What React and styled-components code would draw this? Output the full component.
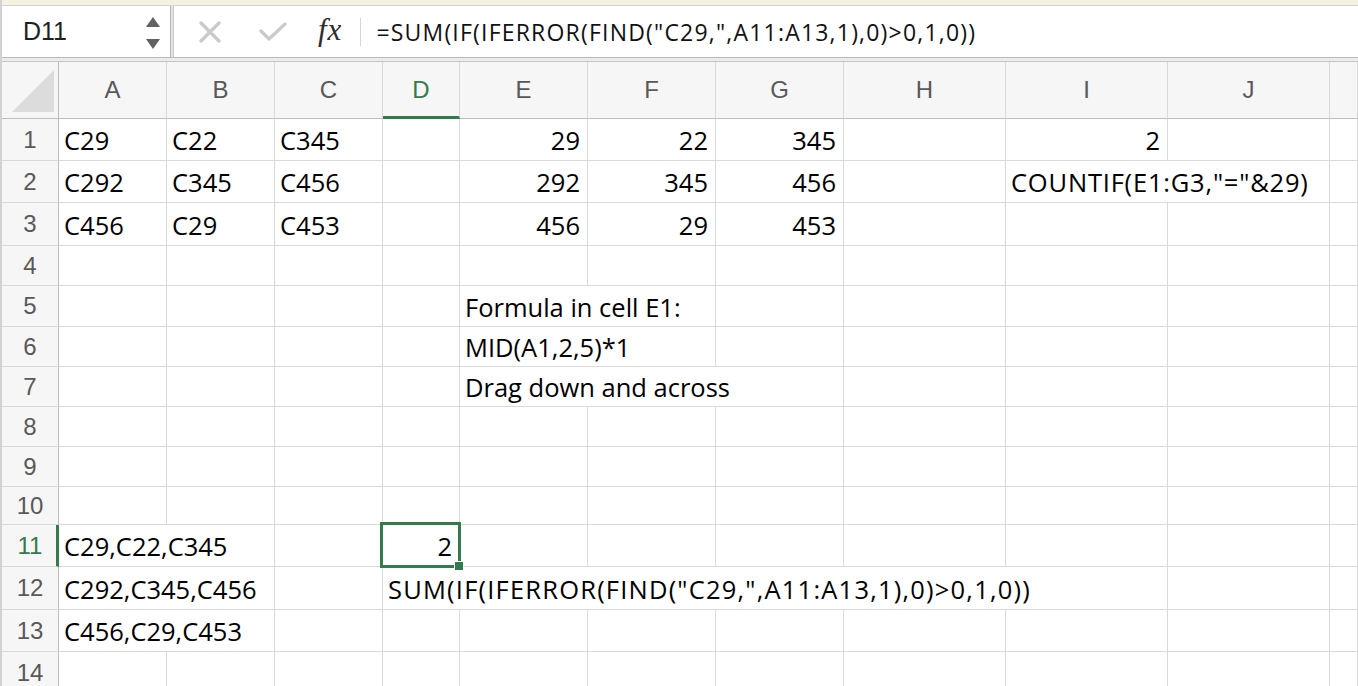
import React from "react";
import styled, { createGlobalStyle } from "styled-components";

const GREEN = "#357a4c";

const Global = createGlobalStyle`
  html, body { margin: 0; padding: 0; background: #ffffff; overflow: hidden; }
  * { box-sizing: border-box; }
`;

const Window = styled.div`
  width: 1358px;
  height: 686px;
  overflow: hidden;
  display: flex;
  flex-direction: column;
  border-left: 2px solid #d2d2d2;
  background: #fff;
`;

const TopStrip = styled.div`
  height: 6px;
  flex: none;
  background: #f6f0e2;
  border-bottom: 1px solid #d9d4c8;
`;

const FormulaBar = styled.div`
  height: 51px;
  flex: none;
  display: flex;
  align-items: stretch;
  background: #fff;
`;

const NameBox = styled.div`
  width: 168px;
  display: flex;
  align-items: center;
  justify-content: space-between;
  padding: 0 10px 0 21px;
  font-family: "Liberation Sans", Arial, sans-serif;
  font-size: 25px;
  color: #1f1f1f;
`;

const Stepper = styled.div`
  display: flex;
  flex-direction: column;
  gap: 12px;
  padding-top: 2px;
`;

const Divider = styled.div`
  width: 4px;
  flex: none;
  background: #e4e4e4;
  border-left: 1px solid #b4b4b4;
  border-right: 1px solid #c9c9c9;
`;

const FormulaArea = styled.div`
  flex: 1;
  display: flex;
  align-items: center;
  padding-left: 24px;
`;

const IconBtn = styled.div`
  width: ${(p) => p.$w}px;
  margin-right: ${(p) => p.$mr}px;
  display: flex;
  align-items: center;
  justify-content: center;
`;

const Fx = styled.div`
  font-family: "Liberation Serif", "Times New Roman", serif;
  font-style: italic;
  font-size: 31px;
  color: #2d2d2d;
  margin-right: 18px;
  margin-top: -4px;
  letter-spacing: 1px;
`;

const Sep = styled.div`
  width: 1px;
  height: 28px;
  background: #d4d4d4;
  margin-right: 15px;
`;

const FormulaText = styled.div`
  font-family: "Open Sans", Lato, sans-serif;
  font-size: 23px;
  letter-spacing: 1.2px;
  color: #111;
  white-space: nowrap;
  padding-top: 1px;
`;

const BarGap = styled.div`
  height: 5px;
  flex: none;
  background: #ececec;
  border-top: 1px solid #b9b9b9;
  border-bottom: 1px solid #c6c6c6;
`;

const Sheet = styled.div`
  flex: 1;
  display: grid;
  grid-template-columns: 57px 108px 108px 108px 77px 128px 128px 128px 162px 162px 162px 1fr;
  grid-template-rows: 57px 42px 42px 43px 40px 41px 40px 40px 40px 40px 38px 42px 43px 42px 42px;
  overflow: hidden;
`;

const Corner = styled.div`
  background: #f6f6f6;
  border-right: 1px solid #bdbdbd;
  border-bottom: 1px solid #bdbdbd;
  display: flex;
  align-items: flex-end;
  justify-content: flex-end;
  padding: 0 4px 6px 0;
`;

const ColHeader = styled.div`
  background: #f6f6f6;
  border-right: 1px solid #d9d9d9;
  border-bottom: ${(p) => (p.$active ? `3px solid ${GREEN}` : "1px solid #bdbdbd")};
  display: flex;
  align-items: center;
  justify-content: center;
  padding-top: ${(p) => (p.$active ? "2px" : "0")};
  font-family: "Liberation Sans", Arial, sans-serif;
  font-size: 24px;
  color: ${(p) => (p.$active ? GREEN : "#595959")};
`;

const RowHeader = styled.div`
  background: #f6f6f6;
  border-right: ${(p) => (p.$active ? `3px solid ${GREEN}` : "1px solid #bdbdbd")};
  border-bottom: 1px solid #d9d9d9;
  display: flex;
  align-items: center;
  justify-content: center;
  padding-left: ${(p) => (p.$active ? "2px" : "0")};
  font-family: "Liberation Sans", Arial, sans-serif;
  font-size: 24px;
  color: ${(p) => (p.$active ? GREEN : "#595959")};
`;

const Cell = styled.div`
  position: relative;
  border-right: 1px solid #d9d9d9;
  border-bottom: 1px solid #d9d9d9;
  display: flex;
  align-items: stretch;
  justify-content: ${(p) => (p.$right ? "flex-end" : "flex-start")};
  white-space: nowrap;
  font-family: "Open Sans", Lato, sans-serif;
  font-size: 25.5px;
  color: #000;
`;

const CellText = styled.span`
  position: relative;
  z-index: 1;
  display: flex;
  align-items: center;
  padding: 1px ${(p) => (p.$right ? "7px" : "0")} 0 ${(p) => (p.$right ? "0" : "5px")};
  letter-spacing: ${(p) => p.$ls || 0}px;
  background: ${(p) => (p.$cover ? "#fff" : "transparent")};
`;

const Selection = styled.div`
  position: absolute;
  top: -3px;
  left: -3px;
  right: -2px;
  bottom: -2px;
  border: 3px solid ${GREEN};
  z-index: 2;
  pointer-events: none;
`;

const Handle = styled.div`
  position: absolute;
  right: -6px;
  bottom: -6px;
  width: 10px;
  height: 10px;
  background: ${GREEN};
  border: 1px solid #fff;
`;

const COLS = ["A", "B", "C", "D", "E", "F", "G", "H", "I", "J", ""];
const ROWS = 14;

const DATA = {
  1: { A: "C29", B: "C22", C: "C345", E: ["29", "r"], F: ["22", "r"], G: ["345", "r"], I: ["2", "r"] },
  2: { A: "C292", B: "C345", C: "C456", E: ["292", "r"], F: ["345", "r"], G: ["456", "r"], I: ['COUNTIF(E1:G3,"="&29)', "l", 0.8] },
  3: { A: "C456", B: "C29", C: "C453", E: ["456", "r"], F: ["29", "r"], G: ["453", "r"] },
  5: { E: "Formula in cell E1:" },
  6: { E: "MID(A1,2,5)*1" },
  7: { E: "Drag down and across" },
  11: { A: "C29,C22,C345", D: ["2", "r"] },
  12: { A: "C292,C345,C456", D: ['SUM(IF(IFERROR(FIND("C29,",A11:A13,1),0)>0,1,0))', "l", 1.2] },
  13: { A: "C456,C29,C453" },
};

const ArrowUp = () => (
  <svg width="14" height="10" viewBox="0 0 14 10">
    <path d="M7 0 L14 10 L0 10 Z" fill="#616161" />
  </svg>
);
const ArrowDown = () => (
  <svg width="14" height="10" viewBox="0 0 14 10">
    <path d="M0 0 L14 0 L7 10 Z" fill="#616161" />
  </svg>
);

export default function App() {
  const rows = [];
  for (let r = 1; r <= ROWS; r++) {
    const active = r === 11;
    rows.push(
      <RowHeader key={`rh${r}`} $active={active}>
        {r}
      </RowHeader>
    );
    COLS.forEach((c) => {
      const v = DATA[r] && c ? DATA[r][c] : undefined;
      const right = Array.isArray(v) && v[1] === "r";
      const text = Array.isArray(v) ? v[0] : v;
      const ls = Array.isArray(v) ? v[2] : 0;
      const sel = r === 11 && c === "D";
      rows.push(
        <Cell key={`${r}${c || "K"}`} $right={right}>
          {text && (
            <CellText $right={right} $cover={!right} $ls={ls}>
              {text}
            </CellText>
          )}
          {sel && (
            <Selection>
              <Handle />
            </Selection>
          )}
        </Cell>
      );
    });
  }

  return (
    <>
      <Global />
      <Window>
        <TopStrip />
        <FormulaBar>
          <NameBox>
            <span>D11</span>
            <Stepper>
              <ArrowUp />
              <ArrowDown />
            </Stepper>
          </NameBox>
          <Divider />
          <FormulaArea>
            <IconBtn $w={24} $mr={36}>
              <svg width="22" height="22" viewBox="0 0 22 22">
                <path d="M2 2 L20 20 M20 2 L2 20" stroke="#cacaca" strokeWidth="3.2" strokeLinecap="round" />
              </svg>
            </IconBtn>
            <IconBtn $w={30} $mr={30}>
              <svg width="28" height="20" viewBox="0 0 28 20">
                <path d="M2 9 L10 17 L26 2" stroke="#cacaca" strokeWidth="3.2" fill="none" strokeLinecap="round" strokeLinejoin="round" />
              </svg>
            </IconBtn>
            <Fx>fx</Fx>
            <Sep />
            <FormulaText>=SUM(IF(IFERROR(FIND("C29,",A11:A13,1),0)&gt;0,1,0))</FormulaText>
          </FormulaArea>
        </FormulaBar>
        <BarGap />
        <Sheet>
          <Corner>
            <svg width="42" height="42" viewBox="0 0 42 42">
              <path d="M42 0 L42 42 L0 42 Z" fill="#dcdcdc" />
            </svg>
          </Corner>
          {COLS.map((c, i) => (
            <ColHeader key={`ch${i}`} $active={c === "D"}>
              {c}
            </ColHeader>
          ))}
          {rows}
        </Sheet>
      </Window>
    </>
  );
}
